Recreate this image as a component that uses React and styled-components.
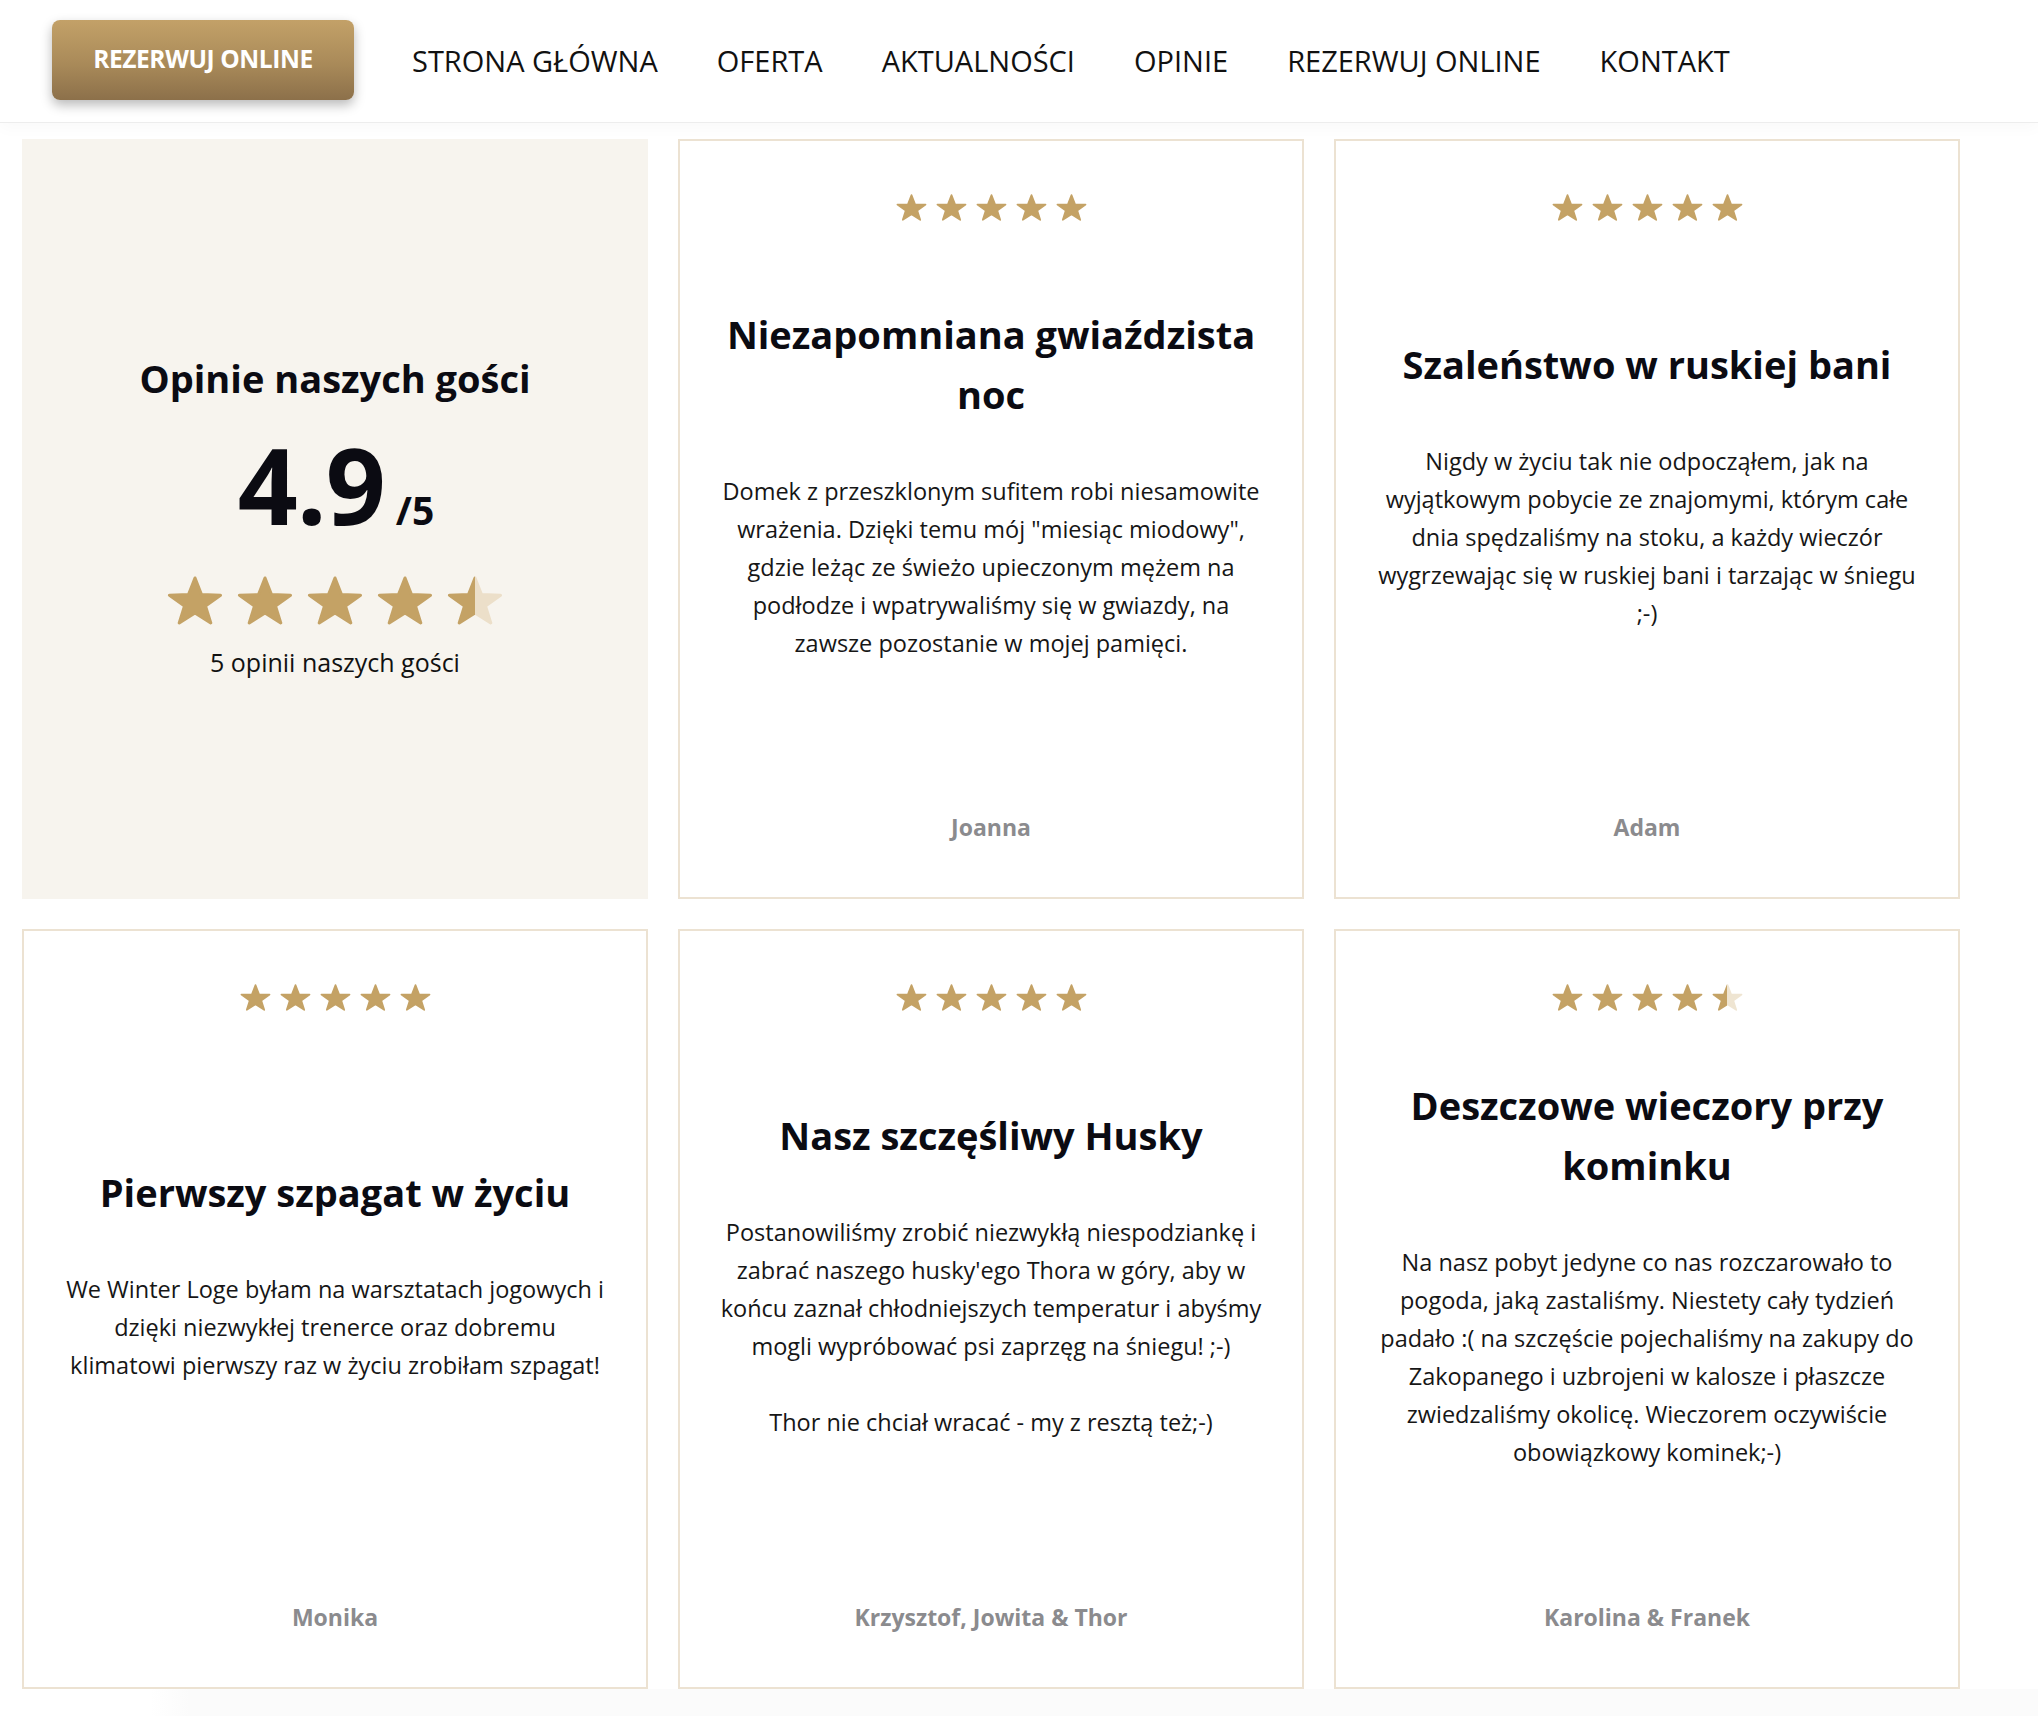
import React, { useId } from "react";
import styled, { createGlobalStyle } from "styled-components";

const GlobalStyle = createGlobalStyle`
  html, body { margin: 0; padding: 0; background: #fff; }
  body {
    font-family: "Open Sans", "Noto Sans", "Liberation Sans", sans-serif;
    color: #111;
  }
  * { box-sizing: border-box; }
`;

const GOLD = "#c4a265";

/* ---------- star drawing ---------- */
const STAR_POINTS = (() => {
  const R = 50 / Math.sin((72 * Math.PI) / 180);
  const r = R * 0.41;
  const k = 0.924;
  const cy = R * k;
  const pts = [];
  for (let i = 0; i < 10; i++) {
    const a = ((-90 + i * 36) * Math.PI) / 180;
    const rad = i % 2 === 0 ? R : r;
    pts.push(`${(50 + rad * Math.cos(a)).toFixed(2)},${(cy + rad * Math.sin(a) * k).toFixed(2)}`);
  }
  return pts.join(" ");
})();

function Star({ fill = 1, width, height, light }) {
  const id = useId().replace(/:/g, "");
  const paint = fill >= 1 ? GOLD : `url(#g${id})`;
  return (
    <svg width={width} height={height} viewBox="-4 -4 108 96" aria-hidden="true">
      {fill < 1 && (
        <defs>
          <linearGradient id={`g${id}`} x1="0" x2="1" y1="0" y2="0">
            <stop offset={`${fill * 100}%`} stopColor={GOLD} />
            <stop offset={`${fill * 100}%`} stopColor={light} />
          </linearGradient>
        </defs>
      )}
      <polygon
        points={STAR_POINTS}
        fill={paint}
        stroke={paint}
        strokeWidth="6"
        strokeLinejoin="round"
      />
    </svg>
  );
}

const StarRow = styled.div`
  display: flex;
  justify-content: center;
  gap: ${(p) => (p.$big ? "14px" : "9px")};
  height: ${(p) => (p.$big ? "49px" : "27px")};
  flex: none;
`;

function Stars({ rating, big }) {
  const w = big ? 56 : 31;
  const h = big ? 49 : 27;
  const light = big ? "#ecdfc9" : "#efe5d2";
  return (
    <StarRow $big={big}>
      {[0, 1, 2, 3, 4].map((i) => (
        <Star key={i} width={w} height={h} light={light} fill={Math.max(0, Math.min(1, rating - i))} />
      ))}
    </StarRow>
  );
}

/* ---------- header ---------- */
const Header = styled.header`
  height: 123px;
  display: flex;
  align-items: center;
  padding-left: 52px;
  border-bottom: 1px solid #ededed;
  box-shadow: 0 6px 14px rgba(0, 0, 0, 0.025);
`;

const BookButton = styled.a`
  display: flex;
  align-items: center;
  justify-content: center;
  width: 302px;
  height: 80px;
  margin-top: -2px;
  padding-bottom: 3px;
  border-radius: 8px;
  background: linear-gradient(180deg, #c3a168 0%, #a98a59 55%, #8c704a 100%);
  box-shadow: 0 5px 12px rgba(0, 0, 0, 0.28);
  color: #fff;
  font-weight: 700;
  font-size: 24.5px;
  letter-spacing: -0.4px;
  text-transform: uppercase;
  text-decoration: none;
`;

const Nav = styled.nav`
  display: flex;
  gap: 59px;
  margin-left: 58px;
  padding-bottom: 2px;
`;

const NavLink = styled.a`
  font-size: 29px;
  font-weight: 400;
  color: #111;
  text-decoration: none;
  text-transform: uppercase;
  white-space: nowrap;
`;

/* ---------- grid ---------- */
const Main = styled.main`
  padding: 16px 0 0 22px;
`;

const Grid = styled.div`
  display: grid;
  grid-template-columns: repeat(3, 626px);
  grid-auto-rows: 760px;
  gap: 30px;
`;

const SummaryCard = styled.section`
  background: #f7f4ee;
  display: flex;
  flex-direction: column;
  align-items: center;
  justify-content: center;
  text-align: center;
  padding-bottom: 10px;
`;

const Title = styled.h2`
  margin: 0 0 ${(p) => (p.$gap ? p.$gap : "48px")};
  font-size: 38px;
  line-height: 60px;
  font-weight: 700;
  color: #0b0b12;
`;

const Score = styled.div`
  display: flex;
  align-items: baseline;
  justify-content: center;
  margin-bottom: 39px;
  margin-left: 2px;
  color: #0b0b12;
`;

const ScoreValue = styled.span`
  font-size: 105px;
  line-height: 104px;
  font-weight: 700;
  letter-spacing: -1px;
`;

const ScoreMax = styled.span`
  font-size: 39px;
  font-weight: 700;
  margin-left: 11px;
`;

const Count = styled.p`
  margin: 18px 0 0;
  font-size: 25px;
  line-height: 38px;
  color: #111;
`;

const Card = styled.article`
  border: 2px solid #ece2d2;
  display: flex;
  flex-direction: column;
  text-align: center;
  padding: 53px 38px 54px;
`;

const Middle = styled.div`
  flex: 1;
  display: flex;
  flex-direction: column;
  justify-content: center;
  margin-bottom: 66px;
`;

const Body = styled.p`
  margin: 0;
  font-size: 23.5px;
  line-height: 38px;
  color: #161616;
  & + & {
    margin-top: 38px;
  }
`;

const Author = styled.div`
  font-size: 23px;
  line-height: 32px;
  font-weight: 700;
  color: #8b8b8e;
`;

const FooterShade = styled.div`
  height: 27px;
  margin-left: 150px;
  background: linear-gradient(90deg, rgba(251, 251, 251, 0) 0px, #fbfbfb 40px);
`;

const reviews = [
  {
    rating: 5,
    title: "Niezapomniana gwiaździsta noc",
    body: [
      'Domek z przeszklonym sufitem robi niesamowite wrażenia. Dzięki temu mój "miesiąc miodowy", gdzie leżąc ze świeżo upieczonym mężem na podłodze i wpatrywaliśmy się w gwiazdy, na zawsze pozostanie w mojej pamięci.',
    ],
    author: "Joanna",
  },
  {
    rating: 5,
    title: "Szaleństwo w ruskiej bani",
    body: [
      "Nigdy w życiu tak nie odpocząłem, jak na wyjątkowym pobycie ze znajomymi, którym całe dnia spędzaliśmy na stoku, a każdy wieczór wygrzewając się w ruskiej bani i tarzając w śniegu ;-)",
    ],
    author: "Adam",
  },
  {
    rating: 5,
    title: "Pierwszy szpagat w życiu",
    body: [
      "We Winter Loge byłam na warsztatach jogowych i dzięki niezwykłej trenerce oraz dobremu klimatowi pierwszy raz w życiu zrobiłam szpagat!",
    ],
    author: "Monika",
  },
  {
    rating: 5,
    title: "Nasz szczęśliwy Husky",
    body: [
      "Postanowiliśmy zrobić niezwykłą niespodziankę i zabrać naszego husky'ego Thora w góry, aby w końcu zaznał chłodniejszych temperatur i abyśmy mogli wypróbować psi zaprzęg na śniegu! ;-)",
      "Thor nie chciał wracać - my z resztą też;-)",
    ],
    author: "Krzysztof, Jowita & Thor",
  },
  {
    rating: 4.5,
    title: "Deszczowe wieczory przy kominku",
    body: [
      "Na nasz pobyt jedyne co nas rozczarowało to pogoda, jaką zastaliśmy. Niestety cały tydzień padało :( na szczęście pojechaliśmy na zakupy do Zakopanego i uzbrojeni w kalosze i płaszcze zwiedzaliśmy okolicę. Wieczorem oczywiście obowiązkowy kominek;-)",
    ],
    author: "Karolina & Franek",
  },
];

const navItems = ["Strona główna", "Oferta", "Aktualności", "Opinie", "Rezerwuj online", "Kontakt"];

export default function App() {
  return (
    <>
      <GlobalStyle />
      <Header>
        <BookButton href="#">Rezerwuj online</BookButton>
        <Nav>
          {navItems.map((n) => (
            <NavLink key={n} href="#">
              {n}
            </NavLink>
          ))}
        </Nav>
      </Header>
      <Main>
        <Grid>
          <SummaryCard>
            <Title $gap="25px">Opinie naszych gości</Title>
            <Score>
              <ScoreValue>4.9</ScoreValue>
              <ScoreMax>/5</ScoreMax>
            </Score>
            <Stars rating={4.5} big />
            <Count>5 opinii naszych gości</Count>
          </SummaryCard>
          {reviews.map((r) => (
            <Card key={r.title}>
              <Stars rating={r.rating} />
              <Middle>
                <Title>{r.title}</Title>
                {r.body.map((b, i) => (
                  <Body key={i}>{b}</Body>
                ))}
              </Middle>
              <Author>{r.author}</Author>
            </Card>
          ))}
        </Grid>
      </Main>
      <FooterShade />
    </>
  );
}
